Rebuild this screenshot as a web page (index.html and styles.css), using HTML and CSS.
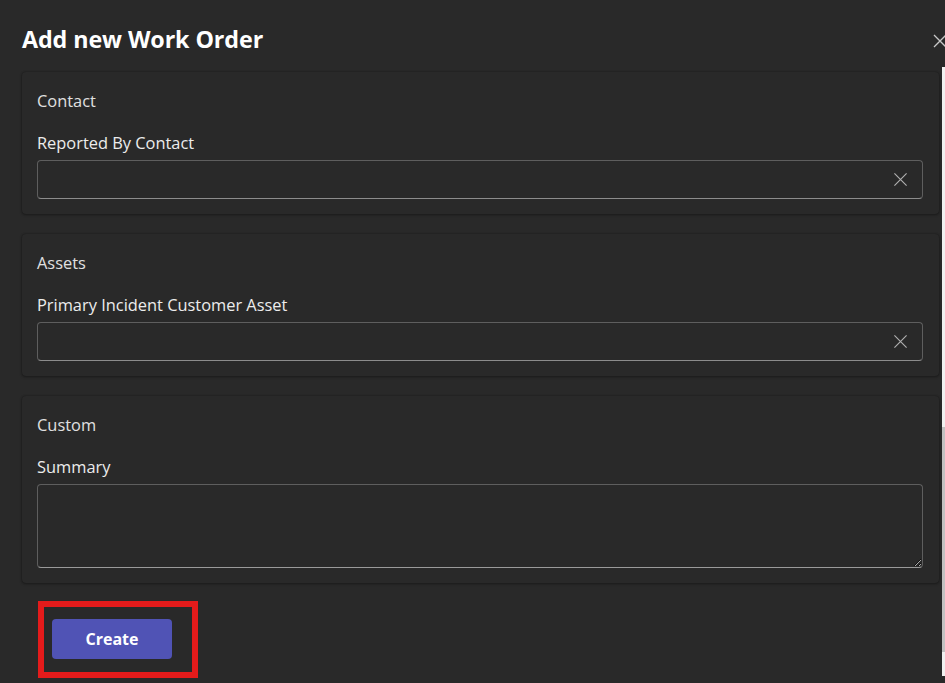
FILE: index.html
```html
<!DOCTYPE html>
<html lang="en">
<head>
<meta charset="utf-8">
<title>Add new Work Order</title>
<link rel="stylesheet" href="styles.css">
</head>
<body>
<div class="dialog">
  <header class="head">
    <h1 class="title">Add new Work Order</h1>
    <button class="close" aria-label="Close">
      <svg width="16" height="16" viewBox="0 0 16 16"><path d="M2 2 L14 14 M14 2 L2 14" stroke="#c8c8c8" stroke-width="1.3" fill="none"/></svg>
    </button>
  </header>
  <div class="body">
    <div class="content">
      <section class="card">
        <div class="card-title">Contact</div>
        <div class="label">Reported By Contact</div>
        <div class="input">
          <svg class="clear" width="16" height="16" viewBox="0 0 16 16"><path d="M1.5 1.5 L14.5 14.5 M14.5 1.5 L1.5 14.5" stroke="#b0b0b0" stroke-width="1.2" fill="none"/></svg>
        </div>
      </section>
      <section class="card">
        <div class="card-title">Assets</div>
        <div class="label">Primary Incident Customer Asset</div>
        <div class="input">
          <svg class="clear" width="16" height="16" viewBox="0 0 16 16"><path d="M1.5 1.5 L14.5 14.5 M14.5 1.5 L1.5 14.5" stroke="#b0b0b0" stroke-width="1.2" fill="none"/></svg>
        </div>
      </section>
      <section class="card">
        <div class="card-title">Custom</div>
        <div class="label">Summary</div>
        <textarea class="area"></textarea>
      </section>
      <div class="footer">
        <div class="highlight">
          <button class="create">Create</button>
        </div>
      </div>
    </div>
    <div class="scrollbar"><div class="thumb"></div></div>
  </div>
</div>
</body>
</html>
```

FILE: styles.css
```css
html, body {
  margin: 0;
  padding: 0;
  background: #292929;
  overflow: hidden;
}
body {
  font-family: "Open Sans", "Noto Sans", sans-serif;
  color: #e6e6e6;
  width: 945px;
  height: 683px;
}
.dialog {
  width: 945px;
  height: 683px;
  overflow: hidden;
}
.head {
  display: flex;
  align-items: center;
  justify-content: space-between;
  width: 960px;
  height: 67px;
  padding-left: 22px;
  box-sizing: border-box;
}
.title {
  margin: 0;
  font-size: 23.3px;
  font-weight: 700;
  color: #ffffff;
  line-height: 30px;
  padding-top: 10px;
  letter-spacing: -0.1px;
}
.close {
  background: none;
  border: 0;
  padding: 0;
  margin-right: 12px;
  margin-top: 14px;
  width: 16px;
  height: 16px;
  display: flex;
}
.body {
  display: flex;
  width: 962px;
}
.content {
  width: 917px;
  margin-left: 22px;
  margin-right: 3px;
  padding-top: 5px;
  flex: none;
}
.card {
  background: #292929;
  border-radius: 4px;
  box-shadow: 0 0 2px rgba(0,0,0,0.35), 0 1px 3px rgba(0,0,0,0.3);
  padding: 18px 16px 15px 15px;
  margin-bottom: 20px;
}
.card-title {
  font-size: 16.4px;
  line-height: 22px;
  color: #e0e0e0;
  margin-bottom: 20px;
}
.label {
  font-size: 16.4px;
  line-height: 22px;
  color: #ececec;
  margin-bottom: 6px;
}
.input {
  height: 39px;
  box-sizing: border-box;
  border: 1px solid #5e5e5e;
  border-bottom-color: #8c8c8c;
  border-radius: 4px;
  background: #292929;
  display: flex;
  align-items: center;
  justify-content: flex-end;
  padding-right: 14px;
}
.clear {
  width: 15px;
  height: 15px;
}
.area {
  display: block;
  width: 100%;
  height: 84px;
  box-sizing: border-box;
  border: 1px solid #5e5e5e;
  border-bottom-color: #9a9a9a;
  border-radius: 4px;
  background: #292929;
  resize: vertical;
  color-scheme: dark;
  margin: 0;
  font-family: inherit;
}
.footer {
  margin-top: -2px;
  padding-left: 16px;
}
.highlight {
  display: inline-block;
  border: 6px solid #e41b1b;
  padding: 12px 20px 13px 8px;
}
.create {
  display: block;
  width: 120px;
  height: 40px;
  border: 0;
  border-radius: 4px;
  background: #5053b5;
  color: #ffffff;
  font-family: inherit;
  font-size: 16px;
  font-weight: 700;
}
.scrollbar {
  width: 17px;
  height: 609px;
  background: #f0f0f0;
  flex: none;
  padding-top: 360px;
  box-sizing: border-box;
}
.thumb {
  height: 225px;
  background: #c1c1c1;
}
```
